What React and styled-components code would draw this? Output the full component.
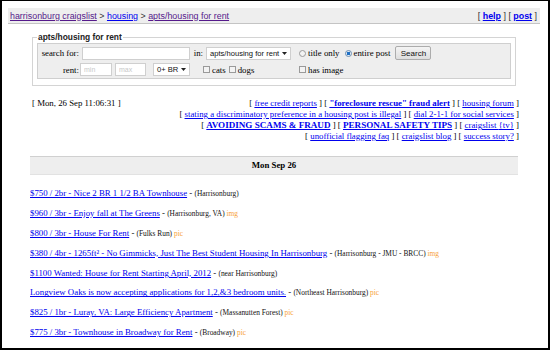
import React from "react";
import styled, { createGlobalStyle } from "styled-components";

const GlobalStyle = createGlobalStyle`
  html, body { margin: 0; padding: 0; background: #fff; }
  body {
    font-family: "Liberation Serif", "Times New Roman", serif;
    font-size: 8.8px;
    color: #000;
  }
  a { color: #00e; }
`;

const Frame = styled.div`
  box-sizing: border-box;
  width: 550px;
  height: 350px;
  border: 2px solid #000;
  border-top-width: 1px;
  overflow: hidden;
  padding: 7px 8px 0 6px;
`;

const HeadBar = styled.div`
  display: flex;
  justify-content: space-between;
  align-items: center;
  height: 15px;
  padding: 0 3px 0 2px;
  background: #eee;
  border-bottom: 1px solid #c4c4c4;
  font-family: "Liberation Sans", Arial, sans-serif;
  font-size: 8.9px;
  color: #333;
`;

const Crumb = styled.a`
  color: ${p => (p.$visited ? "#551a8b" : "#00e")};
`;

const BoldLink = styled.a`
  font-weight: bold;
`;

const Content = styled.div`
  margin: 0 22px;
`;

const Fieldset = styled.fieldset`
  margin: 8px 2px 0;
  padding: 1px 4px 6px 4px;
  border: 1px solid #d4d4d4;
`;

const Legend = styled.legend`
  padding: 0 1px;
  font-family: "Liberation Sans", Arial, sans-serif;
  font-size: 8.4px;
  font-weight: bold;
  color: #222;
`;

const SearchBox = styled.div`
  display: grid;
  grid-template-columns: 38px 108px 10px 85px 1fr;
  column-gap: 3px;
  row-gap: 3px;
  align-items: center;
  padding: 2px 3px;
  background: #eee;
  border: 1px solid #cfcfcf;
`;

const Label = styled.label`
  text-align: right;
  white-space: nowrap;
`;

const TextInput = styled.input`
  box-sizing: border-box;
  width: ${p => p.$w || "100%"};
  height: 13px;
  padding: 0 3px;
  border: 1px solid #cfcfcf;
  background: #fff;
  font-family: "Liberation Sans", Arial, sans-serif;
  font-size: 7px;
  outline: none;
  &::placeholder { color: #c8c8c8; }
`;

const Pair = styled.div`
  display: flex;
  align-items: center;
  gap: 3px;
  margin-left: -2px;
`;

const SelectBox = styled.div`
  box-sizing: border-box;
  display: flex;
  justify-content: space-between;
  align-items: center;
  width: ${p => p.$w};
  height: 13px;
  margin-left: ${p => p.$ml || "0"};
  padding: 0 3px 0 3px;
  border: 1px solid #cfcfcf;
  background: #fff;
  font-family: "Liberation Sans", Arial, sans-serif;
  font-size: 7.6px;
  color: #111;
  white-space: nowrap;
`;

const Options = styled.div`
  grid-column: ${p => p.$span || "auto"};
  display: flex;
  align-items: center;
  gap: 3px;
  padding-left: ${p => p.$pl || "5px"};
  white-space: nowrap;
`;

const Check = styled.input`
  appearance: none;
  box-sizing: border-box;
  width: 7px;
  height: 7px;
  margin: 0 0 0 ${p => p.$ml || "0"};
  border: 1px solid #9a9a9a;
  border-radius: ${p => (p.type === "radio" ? "50%" : "0")};
  background: #f3f3f3;
  &:checked {
    background: radial-gradient(circle, #1f6fc4 0 1.6px, #dfe9f4 2px);
    border-color: #6f8fb0;
  }
`;

const Opt = styled.span`
  margin-left: -1px;
`;

const Button = styled.button`
  height: 14px;
  width: 36px;
  margin-left: 2px;
  padding: 0;
  border: 1px solid #acacac;
  border-radius: 2px;
  background: linear-gradient(#f4f4f4, #dedede);
  font-family: "Liberation Sans", Arial, sans-serif;
  font-size: 8px;
  color: #111;
`;

const Caret = () => (
  <svg width="5" height="3" viewBox="0 0 5 3">
    <path d="M0 0h5L2.5 3z" fill="#222" />
  </svg>
);

const InfoRow = styled.div`
  display: flex;
  justify-content: space-between;
  align-items: flex-start;
  margin: 12px 0 0 2px;
  line-height: 11px;
`;

const Links = styled.div`
  text-align: right;
  margin-right: -1px;
`;

const Big = styled.a`
  font-weight: bold;
  font-size: 9.1px;
`;

const DayHead = styled.h4`
  margin: 14px 0 0;
  height: 17px;
  line-height: 17px;
  text-align: center;
  font-size: 8.8px;
  background: #eee;
  border-top: 1px solid #d0d0d0;
  border-bottom: 1px solid #e2e2e2;
`;

const List = styled.div`
  padding-top: 13px;
`;

const Row = styled.p`
  margin: 0 0 8.9px;
  line-height: 11px;
  white-space: nowrap;
`;

const Where = styled.small`
  font-size: 7.4px;
  color: #111;
`;

const Tag = styled.span`
  font-size: 7.4px;
  color: #f7a23a;
`;

const listings = [
  { t: "$750 / 2br - Nice 2 BR 1 1/2 BA Townhouse", w: "Harrisonburg" },
  { t: "$960 / 3br - Enjoy fall at The Greens", w: "Harrisonburg, VA", tag: "img" },
  { t: "$800 / 3br - House For Rent", w: "Fulks Run", tag: "pic" },
  { t: "$380 / 4br - 1265ft² - No Gimmicks, Just The Best Student Housing In Harrisonburg", w: "Harrisonburg - JMU - BRCC", tag: "img" },
  { t: "$1100 Wanted: House for Rent Starting April, 2012", w: "near Harrisonburg" },
  { t: "Longview Oaks is now accepting applications for 1,2,&3 bedroom units.", w: "Northeast Harrisonburg", tag: "pic" },
  { t: "$825 / 1br - Luray, VA: Large Efficiency Apartment", w: "Massanutten Forest", tag: "pic" },
  { t: "$775 / 3br - Townhouse in Broadway for Rent", w: "Broadway", tag: "pic" },
  { t: "$850 / 3br - Spacious 3 BR, 2 BA Townhouse", w: "Harrisonburg", tag: "pic" },
];

export default function App() {
  return (
    <>
      <GlobalStyle />
      <Frame>
        <HeadBar>
          <span>
            <Crumb $visited href="#">harrisonburg craigslist</Crumb> &gt;{" "}
            <Crumb href="#">housing</Crumb> &gt;{" "}
            <Crumb $visited href="#">apts/housing for rent</Crumb>
          </span>
          <span>
            [ <BoldLink href="#">help</BoldLink> ] [ <BoldLink href="#">post</BoldLink> ]
          </span>
        </HeadBar>

        <Content>
          <Fieldset>
            <Legend>apts/housing for rent</Legend>
            <SearchBox>
              <Label>search for:</Label>
              <TextInput />
              <Label>in:</Label>
              <SelectBox $w="85px">
                apts/housing for rent <Caret />
              </SelectBox>
              <Options>
                <Check type="radio" name="scope" />
                <Opt>title only</Opt>
                <Check type="radio" name="scope" defaultChecked $ml="2px" />
                <Opt>entire post</Opt>
                <Button>Search</Button>
              </Options>

              <Label>rent:</Label>
              <Pair>
                <TextInput $w="32px" placeholder="min" />
                <TextInput $w="31px" placeholder="max" />
                <SelectBox $w="37px" $ml="4px">
                  0+ BR <Caret />
                </SelectBox>
              </Pair>
              <Options $span="3 / 5" $pl="10px">
                <Check type="checkbox" />
                <Opt>cats</Opt>
                <Check type="checkbox" />
                <Opt>dogs</Opt>
              </Options>
              <Options>
                <Check type="checkbox" />
                <Opt>has image</Opt>
              </Options>
            </SearchBox>
          </Fieldset>

          <InfoRow>
            <span>[ Mon, 26 Sep 11:06:31 ]</span>
            <Links>
              [ <a href="#">free credit reports</a> ] [{" "}
              <BoldLink href="#">"foreclosure rescue" fraud alert</BoldLink> ] [{" "}
              <a href="#">housing forum</a> ]
              <br />
              [ <a href="#">stating a discriminatory preference in a housing post is illegal</a> ] [{" "}
              <a href="#">dial 2-1-1 for social services</a> ]
              <br />
              [ <Big href="#">AVOIDING SCAMS &amp; FRAUD</Big> ] [{" "}
              <Big href="#">PERSONAL SAFETY TIPS</Big> ] [ <a href="#">craigslist {"{tv}"}</a> ]
              <br />
              [ <a href="#">unofficial flagging faq</a> ] [ <a href="#">craigslist blog</a> ] [{" "}
              <a href="#">success story?</a> ]
            </Links>
          </InfoRow>

          <DayHead>Mon Sep 26</DayHead>

          <List>
            {listings.map(l => (
              <Row key={l.t}>
                <a href="#">{l.t}</a> - <Where>({l.w})</Where>
                {l.tag && <Tag> {l.tag}</Tag>}
              </Row>
            ))}
          </List>
        </Content>
      </Frame>
    </>
  );
}
